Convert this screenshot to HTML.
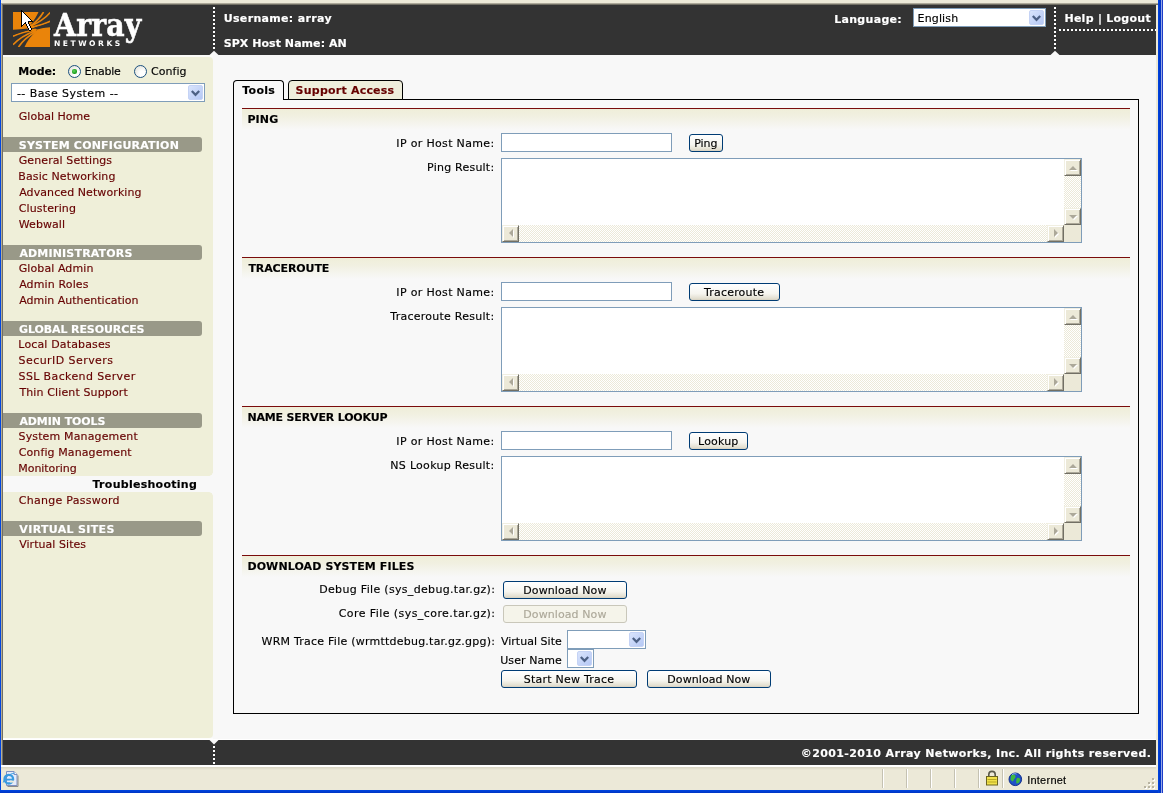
<!DOCTYPE html>
<html><head><meta charset="utf-8"><title>Array Networks - Troubleshooting</title>
<style>
*{box-sizing:border-box;margin:0;padding:0}
html,body{width:1163px;height:793px;overflow:hidden;background:#f8f8f8}
body{position:relative;font-family:"DejaVu Sans","Liberation Sans",sans-serif;font-size:11px;color:#000}
.a{position:absolute;white-space:nowrap}
.t{position:absolute;white-space:nowrap;line-height:13px;height:13px;-webkit-text-stroke:0.15px}
.b{font-weight:bold}
.w{color:#fff}
.r{color:#660000}
.hd{position:absolute;left:3px;width:199px;height:15px;background:#999988;border-radius:0 3px 3px 0}
.sec{position:absolute;left:242px;width:888px;height:22px;border-top:1px solid #7a0c0c;background:linear-gradient(#efeed9 0,#f1f0e1 35%,#f8f8f8 100%)}
.inp{position:absolute;left:501px;width:171px;height:19px;background:#fff;border:1px solid #7f9db9}
.ta{position:absolute;width:581px;height:85px;background:#fff;border:1px solid #7f9db9}
.trk{position:absolute;background:repeating-conic-gradient(#fff 0 25%,#ece9d8 0 50%) 0 0/2px 2px}
.sb{position:absolute;width:17px;height:17px;background:#ece9d8;border:1px solid;border-color:#f1efe2 #716f64 #716f64 #f1efe2;box-shadow:inset 1px 1px 0 #fff,inset -1px -1px 0 #aca899}
.sb i{position:absolute;width:0;height:0;border:4px solid transparent;filter:drop-shadow(1px 1px 0 #fff)}
.au{left:4px;top:0;border-bottom-color:#aca899!important;border-top-width:0!important;top:6px!important}
.ad{left:4px;top:6px;border-top-color:#aca899!important;border-bottom-width:0!important}
.al{left:6px;top:3px;border-right-color:#aca899!important;border-left-width:0!important}
.ar{left:6px;top:3px;border-left-color:#aca899!important;border-right-width:0!important}
.cnr{position:absolute;right:0;bottom:0;width:17px;height:17px;background:#ece9d8}
.btn{position:absolute;height:18px;border:1px solid #003c74;border-radius:3px;background:linear-gradient(#fff 0,#f6f5ef 60%,#e3dfd0 90%,#d6d0c0 100%)}
.btn.dis{border-color:#c9c7ba;background:#f5f4ea}
.sel{position:absolute;background:#fff;border:1px solid #7f9db9}
.arr{position:absolute;right:1px;top:1px;width:15px;bottom:1px;background:linear-gradient(135deg,#d9e4fc,#b5c8f5);border:1px solid #c5d3f5;border-radius:2px}
.chev{position:absolute;left:50%;top:50%;margin:-3px 0 0 -4.5px}
</style></head><body>

<!-- window chrome -->
<div class="a" style="left:0;top:0;width:1163px;height:5px;background:#ece9d8"></div>
<div class="a" style="left:0;top:3px;width:1163px;height:1px;background:#aca899"></div>
<div class="a" style="left:2px;top:4px;width:1156px;height:1px;background:#716f64"></div>
<div class="a" style="left:1px;top:0;width:1px;height:793px;background:#b4ad95"></div>
<div class="a" style="left:1px;top:0;width:1px;height:3px;background:#f4f0e0"></div>
<div class="a" style="left:2px;top:4px;width:1px;height:761px;background:#716f64"></div>
<div class="a" style="left:0;top:0;width:1px;height:793px;background:#0046e0"></div>

<!-- header -->
<div class="a" style="left:3px;top:5px;width:1153px;height:50px;background:#333"></div>
<div class="a" style="left:213px;top:7px;width:2px;height:43px;background:repeating-linear-gradient(#fff 0 2px,#333 2px 4px)"></div>
<div class="a" style="left:1054px;top:7px;width:2px;height:43px;background:repeating-linear-gradient(#fff 0 2px,#333 2px 4px)"></div>
<div class="a" style="left:1059px;top:29px;width:97px;height:2px;background:repeating-linear-gradient(90deg,#fff 0 2px,#333 2px 4px)"></div>
<svg class="a" style="left:209px;top:50px" width="10" height="5"><path d="M0.5 5 L5 0.8 L9.5 5Z" fill="#f8f8f8"/></svg>
<svg class="a" style="left:1050px;top:50px" width="10" height="5"><path d="M0.5 5 L5 0.8 L9.5 5Z" fill="#f8f8f8"/></svg>

<!-- logo -->
<svg class="a" style="left:0;top:0" width="60" height="55" viewBox="0 0 60 55">
<g fill="#ea840a">
<path d="M13 12 H38.5 C37 15.5 34.5 20 30 25.5 L27.5 28.4 Q20 29 13 29.8 Z"/>
<path d="M50 47 H24.5 C27 41.5 31 36 35.5 31.8 L37 29.4 Q43 27.6 50 27.2 Z"/>
<path d="M27 28.5 L31 24.5 L37 29.5 L34 33 Z"/>
</g>
<g fill="none" stroke="#ea840a" stroke-width="1.6">
<path d="M30 26.5 C33.5 24 39.5 19 43.6 12"/>
<path d="M29 27 C36 24 44 20 50.2 12.6"/>
<path d="M28 28 C36 26.2 44 24.5 50.2 21.2"/>
<path d="M36 29.8 C30 30.8 20 33 13 36.3"/>
<path d="M36 30.5 C28 33.5 19 38 13 44.8"/>
<path d="M36 31.5 C30 35 23 40 18.5 47"/>
</g>
<path d="M13 30.8 C22 29.8 28 29 32.5 28.3 C38 27 44 24.8 50 22.8 L50 26.4 C44 27 38 28 32.5 29.1 C28 30 22 32.3 13 35 Z" fill="#333"/>
<path d="M12 11 H51 V48 H12 Z M13 12 V47 H50 V12 Z" fill="#333" fill-rule="evenodd"/>
</svg>
<div id="lgA" class="a w" style="will-change:transform;left:53.7px;top:5px;font-family:'DejaVu Serif Condensed','DejaVu Serif','Liberation Serif',serif;font-weight:bold;font-size:31.5px;line-height:40px;letter-spacing:0.15px;-webkit-text-stroke:0.5px #fff">Array</div>
<div id="lgN" class="a w" style="will-change:transform;left:54.2px;top:39.2px;font-size:7.6px;line-height:10px;font-weight:bold;letter-spacing:2.5px">NETWORKS</div>
<svg class="a" style="left:21px;top:10px" width="12" height="21" viewBox="0 0 12 21" shape-rendering="crispEdges"><path d="M1 2h1v1h-1zM1 3h2v1h-2zM1 4h3v1h-3zM1 5h4v1h-4zM1 6h5v1h-5zM1 7h6v1h-6zM1 8h7v1h-7zM1 9h8v1h-8zM1 10h9v1h-9zM1 11h6v1h-6zM1 12h3v1h-3zM5 12h2v1h-2zM1 13h2v1h-2zM5 13h2v1h-2zM1 14h1v1h-1zM6 14h2v1h-2zM6 15h2v1h-2zM7 16h2v1h-2zM7 17h2v1h-2zM8 18h2v1h-2zM8 19h2v1h-2z" fill="#fff"/><path d="M0 0h1v1h-1zM0 1h2v1h-2zM0 2h1v1h-1zM2 2h1v1h-1zM0 3h1v1h-1zM3 3h1v1h-1zM0 4h1v1h-1zM4 4h1v1h-1zM0 5h1v1h-1zM5 5h1v1h-1zM0 6h1v1h-1zM6 6h1v1h-1zM0 7h1v1h-1zM7 7h1v1h-1zM0 8h1v1h-1zM8 8h1v1h-1zM0 9h1v1h-1zM9 9h1v1h-1zM0 10h1v1h-1zM10 10h1v1h-1zM0 11h1v1h-1zM7 11h5v1h-5zM0 12h1v1h-1zM4 12h1v1h-1zM7 12h1v1h-1zM0 13h1v1h-1zM3 13h2v1h-2zM7 13h1v1h-1zM0 14h1v1h-1zM2 14h1v1h-1zM5 14h1v1h-1zM8 14h1v1h-1zM0 15h2v1h-2zM5 15h1v1h-1zM8 15h1v1h-1zM0 16h1v1h-1zM6 16h1v1h-1zM9 16h1v1h-1zM6 17h1v1h-1zM9 17h1v1h-1zM7 18h1v1h-1zM10 18h1v1h-1zM7 19h1v1h-1zM10 19h1v1h-1zM8 20h2v1h-2z" fill="#000"/></svg>

<div class="sel" style="left:913px;top:8px;width:133px;height:19px"><div class="arr"><svg class="chev" width="9" height="7" viewBox="0 0 9 7"><path d="M0.8 1 L4.5 4.8 L8.2 1" fill="none" stroke="#4d6185" stroke-width="2.3"/></svg></div></div>

<!-- sidebar -->
<div class="a" style="left:3px;top:55px;width:210px;height:2px;background:#fbfbf8"></div>
<div class="a" style="left:3px;top:57px;width:210px;height:681px;background:#efefd9;border-radius:0 4px 4px 0"></div>
<div class="a" style="left:3px;top:476px;width:211px;height:16px;background:#f8f8f8"></div>
<div class="a" style="left:209px;top:472px;width:4px;height:4px;background:radial-gradient(circle at 0 0,#efefd9 3.5px,#f8f8f8 4px)"></div>
<div class="a" style="left:209px;top:492px;width:4px;height:4px;background:radial-gradient(circle at 0 100%,#efefd9 3.5px,#f8f8f8 4px)"></div>
<div class="a" style="left:68px;top:65px;width:13px;height:13px;border:1px solid #1c5180;border-radius:50%;background:radial-gradient(circle at 68% 68%,#fff 0,#fff 25%,#dcdcd0 100%)"><div style="position:absolute;left:3.4px;top:3.4px;width:4.2px;height:4.2px;border-radius:50%;background:radial-gradient(circle at 40% 40%,#5fd45f 0,#21a121 60%)"></div></div>
<div class="a" style="left:134px;top:65px;width:13px;height:13px;border:1px solid #1c5180;border-radius:50%;background:radial-gradient(circle at 68% 68%,#fff 0,#fff 25%,#dcdcd0 100%)"></div>
<div class="sel" style="left:11px;top:83px;width:194px;height:19px"><div class="arr"><svg class="chev" width="9" height="7" viewBox="0 0 9 7"><path d="M0.8 1 L4.5 4.8 L8.2 1" fill="none" stroke="#4d6185" stroke-width="2.3"/></svg></div></div>
<div class="hd" style="top:137px"></div>
<div class="hd" style="top:245px"></div>
<div class="hd" style="top:321px"></div>
<div class="hd" style="top:413px"></div>
<div class="hd" style="top:521px"></div>


<!-- tabs + panel -->
<div class="a" style="left:233px;top:99px;width:906px;height:615px;border:1px solid #000"></div>
<div class="a" style="left:233px;top:80px;width:51px;height:20px;border:1px solid #000;border-bottom:0;border-radius:4px 4px 0 0;background:#f8f8f8"></div>
<div class="a" style="left:288px;top:80px;width:115px;height:20px;border:1px solid #000;border-radius:4px 4px 0 0;background:#efeedc"></div>
<div class="sec" style="top:108px"></div>
<div class="sec" style="top:257px"></div>
<div class="sec" style="top:406px"></div>
<div class="sec" style="top:555px"></div>

<div class="inp" style="top:133px"></div>
<div class="inp" style="top:282px"></div>
<div class="inp" style="top:431px"></div>
<div class="ta" style="left:501px;top:158px">
<div class="trk" style="right:0;top:0;width:17px;bottom:17px"></div>
<div class="trk" style="left:0;bottom:0;height:17px;right:17px"></div>
<div class="sb" style="right:0;top:0"><i class="au"></i></div>
<div class="sb" style="right:0;bottom:17px"><i class="ad"></i></div>
<div class="sb" style="left:0;bottom:0"><i class="al"></i></div>
<div class="sb" style="right:17px;bottom:0"><i class="ar"></i></div>
<div class="cnr"></div>
</div>
<div class="ta" style="left:501px;top:307px">
<div class="trk" style="right:0;top:0;width:17px;bottom:17px"></div>
<div class="trk" style="left:0;bottom:0;height:17px;right:17px"></div>
<div class="sb" style="right:0;top:0"><i class="au"></i></div>
<div class="sb" style="right:0;bottom:17px"><i class="ad"></i></div>
<div class="sb" style="left:0;bottom:0"><i class="al"></i></div>
<div class="sb" style="right:17px;bottom:0"><i class="ar"></i></div>
<div class="cnr"></div>
</div>
<div class="ta" style="left:501px;top:456px">
<div class="trk" style="right:0;top:0;width:17px;bottom:17px"></div>
<div class="trk" style="left:0;bottom:0;height:17px;right:17px"></div>
<div class="sb" style="right:0;top:0"><i class="au"></i></div>
<div class="sb" style="right:0;bottom:17px"><i class="ad"></i></div>
<div class="sb" style="left:0;bottom:0"><i class="al"></i></div>
<div class="sb" style="right:17px;bottom:0"><i class="ar"></i></div>
<div class="cnr"></div>
</div>
<div class="btn" style="left:689px;top:134px;width:34px"></div>
<div class="btn" style="left:689px;top:283px;width:91px"></div>
<div class="btn" style="left:689px;top:432px;width:59px"></div>
<div class="btn" style="left:503px;top:581px;width:124px"></div>
<div class="btn dis" style="left:503px;top:605px;width:124px"></div>
<div class="btn" style="left:501px;top:670px;width:136px"></div>
<div class="btn" style="left:647px;top:670px;width:124px"></div>
<div class="sel" style="left:567px;top:630px;width:79px;height:19px"><div class="arr"><svg class="chev" width="9" height="7" viewBox="0 0 9 7"><path d="M0.8 1 L4.5 4.8 L8.2 1" fill="none" stroke="#4d6185" stroke-width="2.3"/></svg></div></div>
<div class="sel" style="left:567px;top:649px;width:27px;height:19px"><div class="arr"><svg class="chev" width="9" height="7" viewBox="0 0 9 7"><path d="M0.8 1 L4.5 4.8 L8.2 1" fill="none" stroke="#4d6185" stroke-width="2.3"/></svg></div></div>

<!-- footer -->
<div class="a" style="left:3px;top:738px;width:210px;height:2px;background:#fdfdfb"></div>
<div class="a" style="left:3px;top:739px;width:1153px;height:1px;background:#fff"></div>
<div class="a" style="left:3px;top:740px;width:1153px;height:25px;background:#333"></div>
<div class="a" style="left:213px;top:746px;width:2px;height:18px;background:repeating-linear-gradient(#fff 0 2px,#333 2px 4px)"></div>
<svg class="a" style="left:209px;top:740px" width="10" height="5"><path d="M0.5 0 L9.5 0 L5 4.4Z" fill="#f8f8f8"/></svg>
<div class="a" style="left:1px;top:765px;width:1157px;height:2px;background:#fff"></div>
<div class="a" style="left:1px;top:767px;width:1157px;height:23px;background:linear-gradient(#d8d4c2 0,#ece9d8 3px,#ece9d8 100%)"></div>
<div class="a" style="left:0;top:790px;width:1163px;height:3px;background:linear-gradient(#0046e0,#0034c4)"></div>
<div class="a" style="left:1156px;top:5px;width:2px;height:785px;background:#ece9d8"></div>
<div class="a" style="left:1158px;top:0;width:3px;height:793px;background:linear-gradient(90deg,#0046e0,#0030c0)"></div>
<div class="a" style="left:1161px;top:0;width:1px;height:793px;background:#9aa8e4"></div>
<div class="a" style="left:1162px;top:0;width:1px;height:793px;background:#1c3cc8"></div>
<!-- status bar -->
<svg class="a" style="left:2px;top:770px" width="17" height="17" viewBox="0 0 17 17">
<path d="M4.5 1.5 H12 L15 4.5 V15.5 H4.5 Z" fill="#e4ebfb" stroke="#7d90c0" stroke-width="1"/>
<path d="M12 1.5 V4.5 H15" fill="#fff" stroke="#7d90c0" stroke-width="1"/>
<path d="M5.5 16.5 H16 V5.5" fill="none" stroke="#8a8a8a" stroke-width="1"/>
<circle cx="6.8" cy="9.2" r="4.3" fill="none" stroke="#3a9be0" stroke-width="2.3"/>
<path d="M2.6 9.6 H10.5" stroke="#3a9be0" stroke-width="1.8"/>
<path d="M8 11.6 H12" stroke="#ece9d8" stroke-width="2"/>
<path d="M1.2 12.6 C3 7 8 3.6 12.5 3.2" fill="none" stroke="#3a9be0" stroke-width="1"/>
</svg>
<div class="a" style="left:882px;top:769px;width:2px;height:19px;border-left:1px solid #c5c2b2;border-right:1px solid #fff"></div>
<div class="a" style="left:906px;top:769px;width:2px;height:19px;border-left:1px solid #c5c2b2;border-right:1px solid #fff"></div>
<div class="a" style="left:930px;top:769px;width:2px;height:19px;border-left:1px solid #c5c2b2;border-right:1px solid #fff"></div>
<div class="a" style="left:954px;top:769px;width:2px;height:19px;border-left:1px solid #c5c2b2;border-right:1px solid #fff"></div>
<div class="a" style="left:978px;top:769px;width:2px;height:19px;border-left:1px solid #c5c2b2;border-right:1px solid #fff"></div>
<div class="a" style="left:1002px;top:769px;width:2px;height:19px;border-left:1px solid #c5c2b2;border-right:1px solid #fff"></div>

<svg class="a" style="left:985px;top:770px" width="14" height="16" viewBox="0 0 14 16">
<path d="M3.8 7 V4.6 A3.2 3.2 0 0 1 10.2 4.6 V7" fill="none" stroke="#5a5a4a" stroke-width="1.6"/>
<rect x="1.5" y="6.5" width="11" height="8.5" fill="#f2e24a" stroke="#6b6420" stroke-width="1"/>
<path d="M2.5 9.5 H11.5 M2.5 12 H11.5" stroke="#b8a820" stroke-width="1"/>
</svg>
<svg class="a" style="left:1008px;top:772px" width="15" height="15" viewBox="0 0 15 15">
<circle cx="7.3" cy="7.3" r="6.3" fill="#1f50c8" stroke="#14308a" stroke-width="1"/>
<path d="M3 3.5 C5 2 7 2.5 7.5 4 C8 6 6 6.5 5.5 8.5 C5 10.5 3.5 9 2.5 7.5 Z" fill="#3fb83f"/>
<path d="M9 6 C11 5 12.5 6.5 12 8.5 C11.5 10.5 10 12 8.5 11.5 C8 9.5 8 7.5 9 6 Z" fill="#3fb83f"/>
<path d="M4 2.5 C5.5 1.5 7.5 1.5 8.5 2" stroke="#9fc0ff" stroke-width="1" fill="none"/>
</svg>
<svg class="a" style="left:1143px;top:777px" width="13" height="13" viewBox="0 0 13 13" shape-rendering="crispEdges">
<g fill="#fff"><rect x="10" y="2" width="2" height="2"/><rect x="6" y="6" width="2" height="2"/><rect x="10" y="6" width="2" height="2"/><rect x="2" y="10" width="2" height="2"/><rect x="6" y="10" width="2" height="2"/><rect x="10" y="10" width="2" height="2"/></g>
<g fill="#b8b4a2"><rect x="9" y="1" width="2" height="2"/><rect x="5" y="5" width="2" height="2"/><rect x="9" y="5" width="2" height="2"/><rect x="1" y="9" width="2" height="2"/><rect x="5" y="9" width="2" height="2"/><rect x="9" y="9" width="2" height="2"/></g>
</svg>


<div id="txt" style="position:absolute;left:0;top:0;width:1163px;height:793px;will-change:transform">
<div id="h1" class="t b w" style="left:223.73px;top:12.00px;letter-spacing:0.326px;">Username: array</div>
<div id="h2" class="t b w" style="left:223.70px;top:37.00px;letter-spacing:0.054px;">SPX Host Name: AN</div>
<div id="h3" class="t b w" style="left:834.21px;top:13.00px;letter-spacing:0.298px;">Language:</div>
<div id="h4" class="t " style="left:917.60px;top:12.00px;letter-spacing:0.137px;">English</div>
<div id="h5" class="t b w" style="left:1064.42px;top:12.00px;letter-spacing:0.267px;">Help | Logout</div>
<div id="m1" class="t b" style="left:18.29px;top:65.00px;letter-spacing:-0.065px;">Mode:</div>
<div id="m2" class="t " style="left:84.59px;top:65.00px;letter-spacing:-0.241px;">Enable</div>
<div id="m3" class="t " style="left:151.06px;top:65.00px;letter-spacing:0.044px;">Config</div>
<div id="m4" class="t " style="left:16.96px;top:87.00px;letter-spacing:0.430px;">-- Base System --</div>
<div id="m5" class="t r" style="left:18.75px;top:110.00px;letter-spacing:0.026px;">Global Home</div>
<div id="g0" class="t b w" style="left:18.81px;top:139.00px;letter-spacing:0.209px;">SYSTEM CONFIGURATION</div>
<div id="g0i0" class="t r" style="left:18.75px;top:154.00px;letter-spacing:0.092px;">General Settings</div>
<div id="g0i1" class="t r" style="left:18.34px;top:170.00px;letter-spacing:0.099px;">Basic Networking</div>
<div id="g0i2" class="t r" style="left:19.16px;top:186.00px;letter-spacing:0.089px;">Advanced Networking</div>
<div id="g0i3" class="t r" style="left:18.76px;top:202.00px;letter-spacing:0.128px;">Clustering</div>
<div id="g0i4" class="t r" style="left:18.75px;top:218.00px;letter-spacing:0.068px;">Webwall</div>
<div id="g1" class="t b w" style="left:19.38px;top:247.00px;letter-spacing:0.168px;">ADMINISTRATORS</div>
<div id="g1i0" class="t r" style="left:18.75px;top:262.00px;letter-spacing:0.088px;">Global Admin</div>
<div id="g1i1" class="t r" style="left:19.16px;top:278.00px;letter-spacing:0.131px;">Admin Roles</div>
<div id="g1i2" class="t r" style="left:19.16px;top:294.00px;letter-spacing:0.003px;">Admin Authentication</div>
<div id="g2" class="t b w" style="left:19.01px;top:323.00px;letter-spacing:-0.094px;">GLOBAL RESOURCES</div>
<div id="g2i0" class="t r" style="left:18.36px;top:338.00px;letter-spacing:0.138px;">Local Databases</div>
<div id="g2i1" class="t r" style="left:18.52px;top:354.00px;letter-spacing:0.440px;">SecurID Servers</div>
<div id="g2i2" class="t r" style="left:18.52px;top:370.00px;letter-spacing:0.379px;">SSL Backend Server</div>
<div id="g2i3" class="t r" style="left:19.43px;top:386.00px;letter-spacing:0.127px;">Thin Client Support</div>
<div id="g3" class="t b w" style="left:19.38px;top:415.00px;letter-spacing:-0.076px;">ADMIN TOOLS</div>
<div id="g3i0" class="t r" style="left:18.52px;top:430.00px;letter-spacing:0.140px;">System Management</div>
<div id="g3i1" class="t r" style="left:18.76px;top:446.00px;letter-spacing:0.098px;">Config Management</div>
<div id="g3i2" class="t r" style="left:18.36px;top:462.00px;letter-spacing:-0.061px;">Monitoring</div>
<div id="g3i3" class="t b" style="left:92.56px;top:478.00px;letter-spacing:0.272px;">Troubleshooting</div>
<div id="g3i4" class="t r" style="left:18.76px;top:494.00px;letter-spacing:0.266px;">Change Password</div>
<div id="g4" class="t b w" style="left:19.37px;top:523.00px;letter-spacing:0.335px;">VIRTUAL SITES</div>
<div id="g4i0" class="t r" style="left:19.16px;top:538.00px;letter-spacing:0.054px;">Virtual Sites</div>
<div id="tb1" class="t b" style="left:242.19px;top:84.00px;letter-spacing:0.315px;">Tools</div>
<div id="tb2" class="t b r" style="left:295.61px;top:84.00px;letter-spacing:0.217px;">Support Access</div>
<div id="s0" class="t b" style="left:247.42px;top:113.00px;letter-spacing:0.137px;">PING</div>
<div id="s1" class="t b" style="left:248.38px;top:262.00px;letter-spacing:-0.103px;">TRACEROUTE</div>
<div id="s2" class="t b" style="left:247.42px;top:411.00px;letter-spacing:-0.162px;">NAME SERVER LOOKUP</div>
<div id="s3" class="t b" style="left:247.41px;top:560.00px;letter-spacing:0.118px;">DOWNLOAD SYSTEM FILES</div>
<div id="l0a" class="t " style="left:396.33px;top:137.00px;letter-spacing:0.330px;">IP or Host Name:</div>
<div id="l0b" class="t " style="left:427.11px;top:161.00px;letter-spacing:0.219px;">Ping Result:</div>
<div id="l1a" class="t " style="left:396.33px;top:286.00px;letter-spacing:0.330px;">IP or Host Name:</div>
<div id="l1b" class="t " style="left:390.34px;top:310.00px;letter-spacing:0.254px;">Traceroute Result:</div>
<div id="l2a" class="t " style="left:396.33px;top:435.00px;letter-spacing:0.330px;">IP or Host Name:</div>
<div id="l2b" class="t " style="left:390.36px;top:459.00px;letter-spacing:0.278px;">NS Lookup Result:</div>
<div id="d1" class="t " style="left:319.22px;top:583.00px;letter-spacing:0.321px;">Debug File (sys_debug.tar.gz):</div>
<div id="d2" class="t " style="left:338.77px;top:607.00px;letter-spacing:0.425px;">Core File (sys_core.tar.gz):</div>
<div id="d3" class="t " style="left:261.58px;top:634.50px;letter-spacing:0.233px;">WRM Trace File (wrmttdebug.tar.gz.gpg):</div>
<div id="d4" class="t " style="left:500.88px;top:634.50px;letter-spacing:0.035px;">Virtual Site</div>
<div id="d5" class="t " style="left:500.24px;top:653.50px;letter-spacing:0.073px;">User Name</div>
<div id="b1" class="t " style="left:694.20px;top:137.00px;letter-spacing:-0.037px;">Ping</div>
<div id="b2" class="t " style="left:704.01px;top:286.00px;letter-spacing:0.192px;">Traceroute</div>
<div id="b3" class="t " style="left:698.11px;top:435.00px;letter-spacing:0.169px;">Lookup</div>
<div id="b4" class="t " style="left:523.31px;top:584.00px;letter-spacing:0.086px;">Download Now</div>
<div id="b5" class="t " style="left:523.31px;top:608.00px;letter-spacing:0.086px;color:#aca899">Download Now</div>
<div id="b6" class="t " style="left:523.73px;top:673.00px;letter-spacing:0.241px;">Start New Trace</div>
<div id="b7" class="t " style="left:667.31px;top:673.00px;letter-spacing:0.083px;">Download Now</div>
<div id="f1" class="t b w" style="left:800.81px;top:746.50px;letter-spacing:0.375px;">©2001-2010 Array Networks, Inc. All rights reserved.</div>
<div id="st" class="t " style="left:1027.16px;top:773.50px;letter-spacing:0.243px;font-family:'Liberation Sans',sans-serif">Internet</div>
</div>
</body></html>
